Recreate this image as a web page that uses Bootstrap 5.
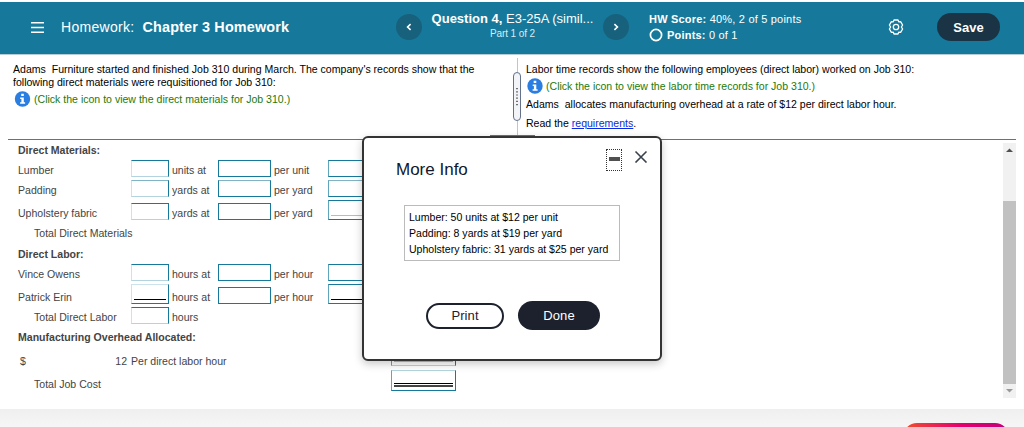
<!DOCTYPE html>
<html lang="en">
<head>
  <meta charset="UTF-8" />
  <title>Chapter 3 Homework</title>
  <link href="https://cdn.jsdelivr.net/npm/bootstrap@5.3.3/dist/css/bootstrap.min.css" rel="stylesheet">
  <style>
    body {
      width: 1024px;
      height: 427px;
      font-family: "Liberation Sans", Arial, sans-serif;
      font-size: 10.55px;
      line-height: 13px;
      color: #000;
      white-space: nowrap;
    }

    /* header */
    .topbar { height: 53px; margin-top: 2px; background: #16799b; border-bottom: 1px solid #b5cdd8; padding: 0 0 2px 31px; }
    .course { width: 365px; font-size: 14px; line-height: 20px; }
    .course-name { font-size: 14.4px; letter-spacing: .15px; margin-left: 8px; }
    .hw-label { letter-spacing: .3px; margin-left: 17px; }
    .round-btn { width: 26px; height: 26px; background: #17617c; }
    .question { width: 181px; padding-bottom: 2px; }
    .question-title { font-size: 13px; line-height: 15px; }
    .question-part { font-size: 10px; line-height: 16px; color: #d9ebf1; letter-spacing: -.1px; }
    .score { width: 239px; margin-left: 20px; font-size: 11px; line-height: 16px; letter-spacing: .2px; }
    .save-btn { width: 63px; height: 28px; margin-left: 33px; background: #1a3345; font-size: 13px; }

    /* problem text */
    .problem { height: 84px; }
    .problem-left { width: 508px; padding: 8px 0 0 13px; }
    .problem-right { padding: 8px 0 0; }
    .splitter { width: 18px; padding-top: 3px; }
    .split-line { width: 1px; background: #c4c4c4; }
    .split-top { height: 14px; }
    .split-grip { width: 8px; height: 49px; border: 1px solid #63718a; border-radius: 4px; background: #f2f4f7; }
    .info-row { padding-top: 2px; gap: 2px; }
    .read-row { padding-top: 6px; }
    .green-link { color: #1c7a0a; }
    .blue-link { color: #0a2be0; }

    /* answer sheet */
    .sheet { height: 259px; border-top: 1px solid #63718a; margin: 0 8px; padding-left: 10px; color: #444; }
    .line { display: grid; grid-template-columns: 113px 41px 46px 56px 54px 63px 65px; height: 20px; align-items: center; }
    .line.low { align-items: end; }
    .line-materials { height: 24px; padding-top: 2px; }
    .line-labor { height: 23px; }
    .line-overhead { height: 21px; }
    .line-rate { height: 22px; }
    .line-cost { height: 28px; }
    .box { height: 17px; border: 1px solid #16799b; background: #fff; align-self: start; }
    .low .box { align-self: end; }
    .box-sm { width: 38px; border-left-color: #cde3eb; border-bottom-color: #b3d3de; }
    .box-md { width: 53px; }
    .box-lg { width: 65px; border-left-color: #5fa5bb; }
    .faded .box { border-top-color: #7fb4c6; }
    .box-tall { height: 20px; padding: 0 2px 3px; display: flex; align-items: end; }
    .low .box-sm.box-tall { border-top-color: #cde3eb; border-bottom-color: #16799b; }
    .box-tall::after { content: ""; flex: 1; border-bottom: 1px solid #000; }
    .box-tall.soft::after { border-bottom-color: #bbb; }
    .box-rate { height: 18px; border-bottom-color: #b3d3de; }
    .box-total { height: 21px; border-top-color: #b3d3de; }
    .box-total.box-tall::after { height: 4px; border-top: 1px solid #000; border-bottom: 2px solid #444; }
    .total-name { padding-left: 16px; }
    .rate { padding: 0 4px 0 2px; }

    .scroller { width: 13px; margin-top: 3px; height: 255px; background: #f1f1f1; }
    .thumb { height: 183px; background: #c1c1c1; }

    .bottom { height: 18px; margin-top: 11px; background: linear-gradient(#efefef, #f6f6f6); padding: 14px 15px 0 0; }
    .check-btn { width: 106px; height: 28px; border-radius: 14px; background: linear-gradient(90deg, #f0512d, #e6006e 55%, #c2007a); }

    /* more info window */
    .info-window { left: 362px; top: 136px; width: 300px; height: 225px; border: 2px solid #333; border-radius: 6px; background: #fff; box-shadow: 0 3px 9px rgba(0, 0, 0, .22); }
    .drag-tab { left: 490px; top: 135px; width: 45px; height: 2px; background: #63718a; }
    .info-title { font-size: 17px; line-height: 20px; color: #10182b; padding: 22px 0 0 32px; }
    .window-tools { padding: 11px 12px 0 0; gap: 12px; }
    .min-btn { width: 16px; height: 22px; border: 1px dotted #333; padding-bottom: 2px; }
    .min-bar { width: 11px; height: 4px; background: #505050; }
    .info-list { width: 216px; height: 56px; margin: 25px 0 0 40px; border: 1px solid #bbb; padding: 3px 0 0 4px; line-height: 16px; }
    .window-actions { margin-top: 40px; padding-left: 2px; gap: 14px; }
    .pill { border-radius: 15px; font-size: 13px; letter-spacing: .1px; color: #1c212d; }
    .pill-print { width: 78px; height: 26px; border: 2px solid #1c212d; }
    .pill-done { width: 82px; height: 29px; background: #1c212d; color: #fff; }
  </style>
</head>
<body class="bg-white overflow-hidden position-relative">

  <header class="topbar d-flex align-items-center text-white">
    <div class="course d-flex align-items-center">
      <svg width="13" height="11" viewBox="0 0 13 11" stroke="#fff" stroke-width="1.4"><path d="M0 .7h13M0 5.5h13M0 10.3h13"/></svg>
      <span class="hw-label">Homework:</span>
      <span class="course-name fw-bold">Chapter 3 Homework</span>
    </div>
    <div class="round-btn rounded-circle d-flex align-items-center justify-content-center">
      <svg width="6" height="8" viewBox="0 0 6 8" fill="none" stroke="#fff" stroke-width="1.6"><path d="M4.6 1.2 1.6 4l3 2.8"/></svg>
    </div>
    <div class="question text-center">
      <div class="question-title"><b>Question 4,</b> E3-25A (simil...</div>
      <div class="question-part">Part 1 of 2</div>
    </div>
    <div class="round-btn rounded-circle d-flex align-items-center justify-content-center">
      <svg width="6" height="8" viewBox="0 0 6 8" fill="none" stroke="#fff" stroke-width="1.6"><path d="m1.4 1.2 3 2.8-3 2.8"/></svg>
    </div>
    <div class="score">
      <div><b>HW Score:</b> 40%, 2 of 5 points</div>
      <div class="d-flex align-items-center">
        <svg class="me-1" width="14" height="14" viewBox="0 0 14 14" fill="none" stroke="#fff" stroke-width="1.7"><circle cx="7" cy="7" r="5.6"/></svg>
        <span><b>Points:</b> 0 of 1</span>
      </div>
    </div>
    <svg width="16" height="16" viewBox="0 0 16 16" fill="none" stroke="#fff" stroke-width="1.3" stroke-linejoin="round">
      <path d="M6 1h4l.7 1.8 1.9-.2 2 3.4-1.2 2 1.2 2-2 3.4-1.9-.2L10 15H6l-.7-1.800-1.900.2-2-3.400L2.600 8 1.400 6l2-3.400 1.900.2z"/>
      <circle cx="8" cy="8" r="2.700"/>
    </svg>
    <div class="save-btn rounded-pill fw-bold d-flex align-items-center justify-content-center">Save</div>
  </header>

  <section class="problem d-flex">
    <div class="problem-left flex-shrink-0">
      <div>Adams&nbsp; Furniture started and finished Job 310 during March. The company's records show that the</div>
      <div>following direct materials were requisitioned for Job 310:</div>
      <div class="info-row d-flex align-items-center green-link">
        <svg width="19" height="16" viewBox="0 0 19 16"><circle cx="9.500" cy="8" r="7.700" fill="#2a7de1"/><path d="M8.200 2.800h2.600v2.100H8.200zM7.200 6.500h3.600v4.700h1.300v1.500H7.100v-1.500h1.300V8H7.200z" fill="#fff"/></svg>
        <span>(Click the icon to view the direct materials for Job 310.)</span>
      </div>
    </div>
    <div class="splitter d-flex flex-column align-items-center flex-shrink-0">
      <div class="split-line split-top"></div>
      <div class="split-grip d-flex align-items-center justify-content-center">
        <svg width="2" height="18" viewBox="0 0 2 18"><path d="M1 0v18" stroke="#444" stroke-width="1.500" stroke-dasharray="1.200 2"/></svg>
      </div>
      <div class="split-line flex-fill"></div>
    </div>
    <div class="problem-right">
      <div>Labor time records show the following employees (direct labor) worked on Job 310:</div>
      <div class="info-row d-flex align-items-center green-link">
        <svg width="18" height="16" viewBox="0 0 18 16"><circle cx="9" cy="8" r="7.700" fill="#2a7de1"/><path d="M7.700 2.800h2.600v2.100H7.700zM6.700 6.500h3.600v4.700h1.300v1.500H6.600v-1.500h1.300V8H6.700z" fill="#fff"/></svg>
        <span>(Click the icon to view the labor time records for Job 310.)</span>
      </div>
      <div class="pt-1">Adams&nbsp; allocates manufacturing overhead at a rate of $12 per direct labor hour.</div>
      <div class="read-row">Read the <a class="blue-link" href="#">requirements</a>.</div>
    </div>
  </section>

  <section class="sheet d-flex justify-content-between">
    <div>
      <div class="line fw-bold"><span>Direct Materials:</span></div>
      <div class="line">
        <span>Lumber</span><div class="box box-sm"></div><span>units at</span><div class="box box-md"></div><span>per unit</span><div class="box box-lg"></div>
      </div>
      <div class="line faded">
        <span>Padding</span><div class="box box-sm"></div><span>yards at</span><div class="box box-md"></div><span>per yard</span><div class="box box-lg"></div>
      </div>
      <div class="line low">
        <span>Upholstery fabric</span><div class="box box-sm"></div><span>yards at</span><div class="box box-md"></div><span>per yard</span><div class="box box-lg box-tall soft"></div>
      </div>
      <div class="line line-materials"><span class="total-name">Total Direct Materials</span></div>
      <div class="line fw-bold"><span>Direct Labor:</span></div>
      <div class="line">
        <span>Vince Owens</span><div class="box box-sm"></div><span>hours at</span><div class="box box-md"></div><span>per hour</span><div class="box box-lg"></div>
      </div>
      <div class="line low">
        <span>Patrick Erin</span><div class="box box-sm box-tall"></div><span>hours at</span><div class="box box-md"></div><span>per hour</span><div class="box box-lg box-tall"></div>
      </div>
      <div class="line line-labor">
        <span class="total-name pt-1">Total Direct Labor</span><div class="box box-sm align-self-center"></div><span class="pt-1">hours</span>
      </div>
      <div class="line line-overhead fw-bold"><span>Manufacturing Overhead Allocated:</span></div>
      <div class="line line-rate">
        <div class="rate d-flex justify-content-between pt-1"><span>$</span><span>12</span></div><span class="pt-1">Per direct labor hour</span>
        <div></div><div></div><div></div><div></div><div class="box box-lg box-tall box-rate soft"></div>
      </div>
      <div class="line line-cost">
        <span class="total-name">Total Job Cost</span>
        <div></div><div></div><div></div><div></div><div></div><div class="box box-lg box-tall box-total"></div>
      </div>
    </div>
    <div class="scroller d-flex flex-column align-items-center justify-content-end">
      <svg width="13" height="58" viewBox="0 0 13 58"><path d="m3 9 3.500-3.500L10 9z" fill="#505050"/></svg>
      <div class="thumb w-100"></div>
      <svg width="13" height="14" viewBox="0 0 13 14"><path d="m3 5 3.500 3.500L10 5z" fill="#999"/></svg>
    </div>
  </section>

  <footer class="bottom d-flex justify-content-end overflow-hidden">
    <div class="check-btn flex-shrink-0"></div>
  </footer>

  <div class="drag-tab position-absolute"></div>
  <div class="info-window position-absolute">
    <div class="d-flex justify-content-between">
      <div class="info-title">More Info</div>
      <div class="window-tools d-flex">
        <div class="min-btn d-flex align-items-center justify-content-center"><div class="min-bar"></div></div>
        <svg width="14" height="14" viewBox="0 0 14 14" stroke="#39414f" stroke-width="1.600"><path d="m1.500 2.500 11 11M12.500 2.500l-11 11"/></svg>
      </div>
    </div>
    <div class="info-list">
      <div>Lumber: 50 units at $12 per unit</div>
      <div>Padding: 8 yards at $19 per yard</div>
      <div>Upholstery fabric: 31 yards at $25 per yard</div>
    </div>
    <div class="window-actions d-flex justify-content-center align-items-center">
      <div class="pill pill-print d-flex align-items-center justify-content-center">Print</div>
      <div class="pill pill-done d-flex align-items-center justify-content-center">Done</div>
    </div>
  </div>

  <script src="https://cdn.jsdelivr.net/npm/bootstrap@5.3.3/dist/js/bootstrap.bundle.min.js"></script>
</body>
</html>
